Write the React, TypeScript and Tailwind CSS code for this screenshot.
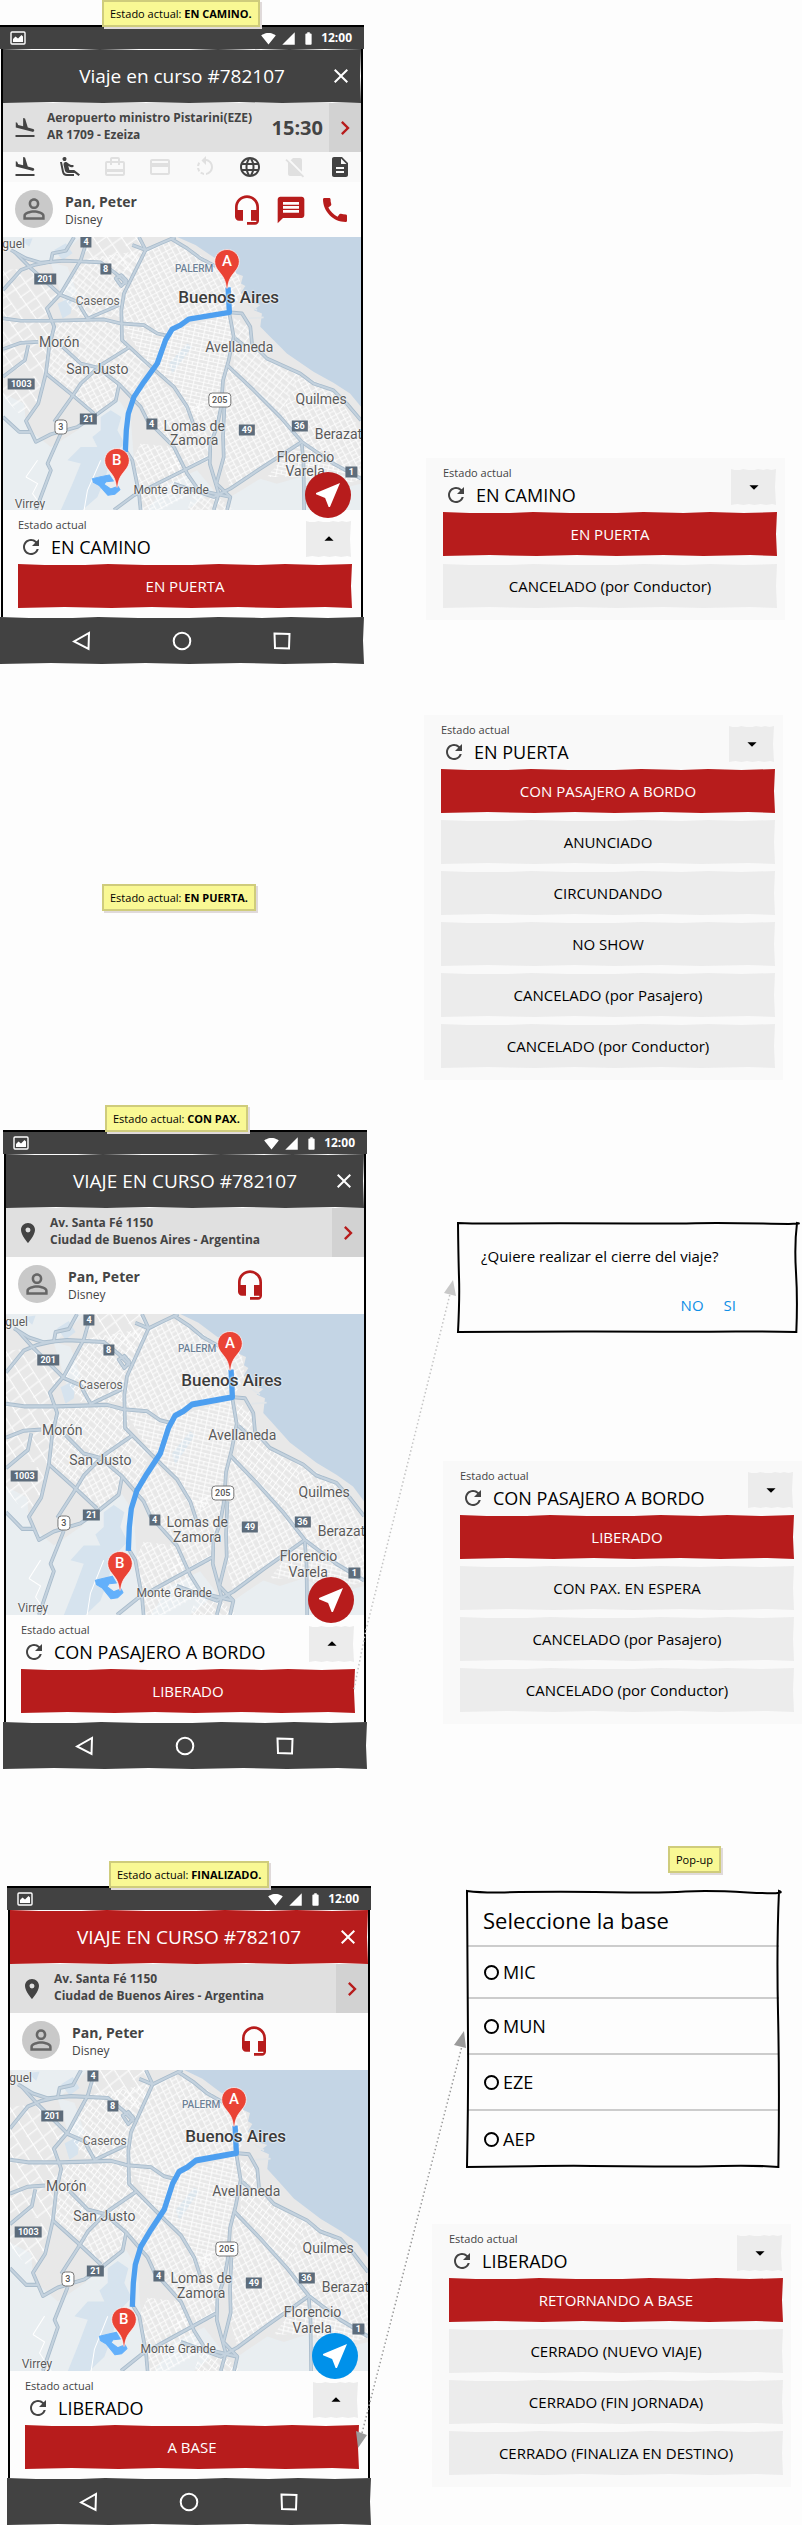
import { useId } from "react";
import type { ReactNode } from "react";
import {
  MdAirlineSeatReclineExtra,
  MdArrowDropDown,
  MdArrowDropUp,
  MdBatteryFull,
  MdCall,
  MdCardTravel,
  MdChevronRight,
  MdClose,
  MdDescription,
  MdFlightLand,
  MdHeadsetMic,
  MdLanguage,
  MdMessage,
  MdNearMe,
  MdPayment,
  MdPersonOutline,
  MdPlace,
  MdRefresh,
  MdRotateLeft,
  MdSignalCellular4Bar,
  MdSignalCellularNoSim,
  MdSignalWifi4Bar,
} from "react-icons/md";

// Hand-drawn edge for filled bars.
const WOBBLY =
  "[clip-path:polygon(0_0,8%_1px,20%_1px,27%_0,38%_1px,52%_1px,60%_0,72%_1px,80%_0,90%_1px,100%_0,calc(100%-1px)_50%,100%_100%,92%_calc(100%-1px),78%_100%,66%_calc(100%-1px),52%_100%,40%_calc(100%-1px),28%_100%,14%_calc(100%-1px),0_100%)]";

function SketchFrame() {
  return (
    <svg
      className="pointer-events-none absolute inset-0 h-full w-full overflow-visible"
      viewBox="0 0 100 100"
      preserveAspectRatio="none"
      aria-hidden="true"
    >
      <path
        d="M0 0 Q5 .7 12 .5 T30 .3 T52 .5 T70 .2 T90 .5 T100 0 Q99.200 20 99.700 45 T99.800 100 Q92 99.300 82 99.600 T60 99.800 T40 99.600 T20 99.700 T0 100 Q.5 70 .3 50 T0 0Z"
        fill="none"
        stroke="#000"
        strokeWidth="2"
        vectorEffect="non-scaling-stroke"
      />
    </svg>
  );
}

function Note({ children }: { children: ReactNode }) {
  return (
    <p className="relative z-10 w-fit border-2 border-[#cfcc7c] bg-[#f9f894] px-1.5 text-[11px] leading-[23px] whitespace-nowrap text-black shadow-[2px_2px_0_#e0dada]">
      {children}
    </p>
  );
}

/* ---------- Map ---------- */

const MAP_X = 6;
const MAP_Y = 21;
const MAP_W = 1077;
const MAP_H = 818;

const place = (x: number, y: number) => ({
  left: `${((x - MAP_X) / MAP_W) * 100}%`,
  top: `${((y - MAP_Y) / MAP_H) * 100}%`,
});

const ROADS = [
  "M6 265 60 272 160 272 310 268 360 280 430 285 470 310 505 318",
  "M415 21 435 60 400 130 370 190 362 240 364 330 440 400 520 470 560 530 582 590",
  "M525 21 480 40 435 60 395 45",
  "M510 25 560 55 600 85 645 108",
  "M30 60 75 85 120 98 190 92 300 97 345 130 378 160",
  "M345 145 362 135 378 152 362 168Z",
  "M6 180 60 120 100 105 150 95 155 70 195 62 220 21",
  "M40 65 90 115 130 150 180 195 230 215 262 268",
  "M262 21 240 90 180 190 138 235 160 290 145 350 135 430 112 520 75 572 105 635 150 612 230 590 285 555 345 512 355 465",
  "M262 265 355 225",
  "M6 357 60 338 112 335",
  "M82 345 72 390 6 440",
  "M135 430 215 495 280 550",
  "M385 352 300 405 240 460 210 505 160 575",
  "M185 350 240 400 290 412 355 462 420 530 440 570 520 650 560 730 595 780 690 800",
  "M6 560 55 605 90 605",
  "M180 610 140 700 150 720 105 839",
  "M687 250 700 320 685 390 668 450 662 530 650 590 630 640 628 700 655 790 640 839",
  "M672 530 668 620 670 680 648 760 690 800 680 839",
  "M705 325 730 345",
  "M680 405 760 480 840 560 905 635 1000 700 1083 745",
  "M690 247 725 250 750 290 755 340 800 385 900 430 940 460 1000 480 1040 520 1083 570",
  "M905 635 780 715 690 775 640 800 520 760",
  "M905 640 910 700 912 839",
  "M625 683 500 745 400 795 340 839",
  "M372 655 395 690 415 790 420 839",
];

const TOWNS: { name: string; x: number; y: number; look: string }[] = [
  { name: "guel", x: 38, y: 42, look: "text-[12px] text-[#5a5a5a]" },
  { name: "PALERM", x: 581, y: 116, look: "text-[10px] font-medium text-[#6c8196]" },
  { name: "Caseros", x: 291, y: 214, look: "text-[12px] text-[#666]" },
  { name: "Buenos Aires", x: 685, y: 201, look: "text-[17px] font-medium text-[#3c3c3c]" },
  { name: "Morón", x: 175, y: 335, look: "text-[14px] text-[#5a5a5a]" },
  { name: "San Justo", x: 290, y: 417, look: "text-[14px] text-[#5a5a5a]" },
  { name: "Avellaneda", x: 717, y: 350, look: "text-[14px] text-[#5a5a5a]" },
  { name: "Quilmes", x: 963, y: 505, look: "text-[14px] text-[#5a5a5a]" },
  { name: "Lomas de", x: 581, y: 587, look: "text-[14px] text-[#5a5a5a]" },
  { name: "Zamora", x: 581, y: 628, look: "text-[14px] text-[#5a5a5a]" },
  { name: "Berazat", x: 1015, y: 610, look: "text-[14px] text-[#5a5a5a]" },
  { name: "Florencio", x: 916, y: 680, look: "text-[14px] text-[#5a5a5a]" },
  { name: "Varela", x: 915, y: 721, look: "text-[14px] text-[#5a5a5a]" },
  { name: "Monte Grande", x: 512, y: 780, look: "text-[12px] text-[#5a5a5a]" },
  { name: "Virrey", x: 87, y: 820, look: "text-[12px] text-[#5a5a5a]" },
];

const SHIELDS = [
  { n: "4", x: 256, y: 36 },
  { n: "8", x: 315, y: 118 },
  { n: "201", x: 133, y: 147 },
  { n: "1003", x: 61, y: 460 },
  { n: "21", x: 263, y: 567 },
  { n: "4", x: 453, y: 580 },
  { n: "49", x: 740, y: 600 },
  { n: "36", x: 898, y: 587 },
  { n: "1", x: 1054, y: 726 },
];

const ROUTES = [
  { n: "3", x: 180, y: 589 },
  { n: "205", x: 658, y: 508 },
];

function Pin({ letter, x, y }: { letter: string; x: number; y: number }) {
  return (
    <div className="absolute h-10 w-[26px] -translate-x-1/2 -translate-y-full" style={place(x, y)}>
      <svg viewBox="0 0 26 40" className="absolute inset-0 h-full w-full" aria-hidden="true">
        <path
          d="M13 0.500C6 .5.7 5.800.7 12.600c0 4 1.800 7 4.500 10.200C9 27.500 11.600 31 12.300 38.500c.1 1.200 1.300 1.200 1.400 0C14.400 31 17 27.500 20.800 22.800c2.700-3.200 4.500-6.200 4.500-10.200C25.300 5.800 20 .5 13 .5Z"
          fill="#ea4335"
          stroke="#fff"
          strokeWidth=".7"
        />
      </svg>
      <span className="relative block text-center font-[Roboto] text-[15px] leading-[25px] font-medium text-white">
        {letter}
      </span>
    </div>
  );
}

function TripMap({ size }: { size: string }) {
  const id = useId().replace(/:/g, "");
  return (
    <div className={`relative overflow-hidden bg-[#e8e8e8] ${size}`}>
      <svg
        className="absolute inset-0 h-full w-full"
        viewBox={`${MAP_X} ${MAP_Y} ${MAP_W} ${MAP_H}`}
        preserveAspectRatio="none"
        role="img"
        aria-label="Mapa del viaje"
      >
        <defs>
          <pattern id={`${id}a`} width="34" height="24" patternUnits="userSpaceOnUse" patternTransform="rotate(-28)">
            <path d="M0 2H34M0 13H20M2 0V24M19 0V24" stroke="#fff" strokeWidth="2.600" fill="none" />
          </pattern>
          <pattern id={`${id}b`} width="26" height="32" patternUnits="userSpaceOnUse" patternTransform="rotate(38)">
            <path d="M0 3H26M0 18H26M4 0V32M17 3V18" stroke="#fff" strokeWidth="2.600" fill="none" />
          </pattern>
          <pattern id={`${id}c`} width="30" height="22" patternUnits="userSpaceOnUse" patternTransform="rotate(12)">
            <path d="M0 2H30M0 12H30M2 0V22M16 0V12" stroke="#fff" strokeWidth="2.600" fill="none" />
          </pattern>
          <pattern id={`${id}d`} width="70" height="56" patternUnits="userSpaceOnUse" patternTransform="rotate(-35)">
            <path d="M0 3H70M0 30H40M4 0V56M40 3V56" stroke="#fff" strokeWidth="3" fill="none" />
          </pattern>
        </defs>

        {/* open country */}
        <g fill="#e9eef1">
          <path d="M6 21H240L200 60 150 100 190 220 230 190 200 110 160 100 90 90 40 60Z" />
          <path d="M6 490 70 520 75 590 150 650 230 600 290 550 355 510 390 560 400 690 420 839H6Z" />
          <path d="M690 800 780 745 830 760 900 740 1000 780 1083 760V839H690Z" />
          <path d="M500 760 590 720 640 780 560 839H440Z" />
        </g>
        <path
          d="M300 560 330 540 362 560 350 600 372 640 330 680 315 740 290 800 245 839H180L215 760 240 700 200 690 240 650 290 650 275 620 300 600Z"
          fill="#d6e3ee"
        />
        <path d="M160 60 195 40 215 70 185 90ZM170 220 215 200 210 250 185 265ZM60 30 95 25 85 50Z" fill="#d6e3ee" />
        <path d="M505 400 560 340 575 350 515 430Z" fill="#dbe5ec" />

        {/* street grids */}
        <path d="M230 90 430 60 370 190 362 260 230 260 180 190Z" fill={`url(#${id}b)`} />
        <path d="M435 60 515 25 640 100 715 130 725 190 690 247 565 267 500 310 362 280 370 190Z" fill={`url(#${id}a)`} />
        <path d="M6 120 90 115 180 200 140 240 160 300 130 430 6 410Z" fill={`url(#${id}d)`} />
        <path d="M160 272 362 272 385 352 440 400 400 490 355 465 290 412 215 495 135 430Z" fill={`url(#${id}b)`} />
        <path d="M215 495 290 412 355 465 345 512 285 550Z" fill={`url(#${id}a)`} />
        <path d="M260 21H415L435 60 400 130 300 97 240 90Z" fill={`url(#${id}d)`} />
        <path d="M362 280 505 318 470 400 440 400Z" fill={`url(#${id}c)`} />
        <path d="M515 300 687 252 705 325 680 400 668 480 590 560 520 470 470 420Z" fill={`url(#${id}c)`} />
        <path d="M700 255 745 290 755 340 800 385 900 430 840 560 700 420Z" fill={`url(#${id}b)`} />
        <path d="M400 510 460 430 560 530 660 500 650 590 628 690 500 745 520 650 440 570Z" fill={`url(#${id}a)`} />
        <path d="M680 410 905 635 690 775 665 690Z" fill={`url(#${id}a)`} />
        <path d="M840 560 900 430 1000 480 1083 600V745L905 635Z" fill={`url(#${id}a)`} />
        <path d="M420 640 520 650 560 730 595 780 480 839H415L395 690Z" fill={`url(#${id}a)`} />
        <path d="M905 640 1083 745 1000 780 912 740 800 740 850 680Z" fill={`url(#${id}c)`} />
        <path d="M590 760 640 790 700 839H560Z" fill={`url(#${id}b)`} />
        <path d="M6 460 130 430 112 520 75 572 6 500Z" fill={`url(#${id}d)`} />
        <path d="M75 740 110 760 95 790 130 839M300 690 260 780 250 839M75 740 110 690" fill="none" stroke="#fff" strokeWidth="3" />

        {/* river */}
        <path
          d="M530 21 585 45 640 82 700 112 708 130 728 138 722 160 735 168 720 190 742 192 748 215 780 225 760 240 785 250 780 290 800 310 860 370 940 425 1000 458 1050 490 1083 530V21Z"
          fill="#c4d5e5"
        />
        <path d="M735 200 770 212M745 265 790 262M740 222 770 240" stroke="#e2e6e9" strokeWidth="5" fill="none" />

        {/* main roads */}
        <g fill="none" stroke="#a9bccc" strokeWidth="11" strokeLinejoin="round">
          {ROADS.map((d) => (
            <path key={d} d={d} />
          ))}
        </g>
        <g fill="none" stroke="#c4d2de" strokeWidth="6" strokeLinejoin="round">
          {ROADS.map((d) => (
            <path key={d} d={d} />
          ))}
        </g>

        {/* trip */}
        <path
          d="M683 172 687 247 565 267 540 285 515 297 495 330 470 400 430 455 400 500 383 550 377 600 374 665"
          fill="none"
          stroke="#4d9ff0"
          strokeWidth="16"
          strokeLinejoin="round"
        />
        <path
          d="M326 734 300 739 275 745 278 756 296 766 322 795 342 792 358 778 352 768 330 776 310 762 316 754 338 752Z"
          fill="#63b0fb"
          stroke="#63b0fb"
          strokeWidth="3"
          strokeLinejoin="round"
        />
      </svg>

      {SHIELDS.map((s) => (
        <span
          key={`${s.n}-${s.x}`}
          className="absolute -translate-x-1/2 -translate-y-1/2 bg-[#5d6c7b] px-[3px] font-[Roboto] text-[9px] leading-[11px] font-bold text-white"
          style={place(s.x, s.y)}
        >
          {s.n}
        </span>
      ))}
      {ROUTES.map((s) => (
        <span
          key={s.n}
          className="absolute -translate-x-1/2 -translate-y-1/2 rounded-[4px] border border-[#777] bg-white px-[3px] font-[Roboto] text-[9px] leading-[13px] font-medium text-[#555]"
          style={place(s.x, s.y)}
        >
          {s.n}
        </span>
      ))}
      {TOWNS.map((t) => (
        <span
          key={t.name}
          className={`absolute -translate-x-1/2 -translate-y-1/2 font-[Roboto] leading-none whitespace-nowrap [text-shadow:0_0_2px_#fff,0_0_2px_#fff] ${t.look}`}
          style={place(t.x, t.y)}
        >
          {t.name}
        </span>
      ))}
      <Pin letter="A" x={680} y={177} />
      <Pin letter="B" x={348} y={774} />
    </div>
  );
}

/* ---------- Current state ---------- */

function StateHeader({ value, open }: { value: string; open: boolean }) {
  return (
    <div className="flex items-start justify-between pb-[5px]">
      <div>
        <p className="text-[11px] leading-[14px] text-[#444]">Estado actual</p>
        <div className="mt-0.5 flex h-[25px] items-center gap-2 pl-px">
          <button type="button" aria-label="Actualizar" className="text-[#444]">
            <MdRefresh size={24} />
          </button>
          <p className="text-[18px] leading-6 whitespace-nowrap text-black">{value}</p>
        </div>
      </div>
      <button
        type="button"
        aria-label={open ? "Contraer" : "Desplegar"}
        className={`mt-[3px] mr-px flex h-9 w-[45px] items-center justify-center bg-[#ececec] text-black ${WOBBLY}`}
      >
        {open ? <MdArrowDropDown size={22} /> : <MdArrowDropUp size={22} />}
      </button>
    </div>
  );
}

function PrimaryButton({ children }: { children: ReactNode }) {
  return (
    <button type="button" className={`h-11 w-full bg-[#b71c1c] text-[15px] text-white ${WOBBLY}`}>
      {children}
    </button>
  );
}

function StatePanel({
  value,
  primary,
  options,
  spacing = "gap-[7px]",
}: {
  value: string;
  primary: string;
  options: string[];
  spacing?: string;
}) {
  return (
    <div className="w-full max-w-[359px] bg-[#f9f9f9] pt-2 pr-2 pb-3 pl-[17px]">
      <StateHeader value={value} open />
      <div className={`flex flex-col ${spacing}`}>
        <PrimaryButton>{primary}</PrimaryButton>
        {options.map((o) => (
          <button key={o} type="button" className={`h-11 w-full bg-[#ececec] text-[15px] text-black ${WOBBLY}`}>
            {o}
          </button>
        ))}
      </div>
    </div>
  );
}

/* ---------- Phone ---------- */

function StatusBar() {
  return (
    <div className="flex h-6 items-center justify-between border-t-2 border-black bg-[#424242] pr-3 pl-[10px] text-white">
      <svg width="16" height="14" viewBox="0 0 16 14" aria-hidden="true">
        <rect x="1" y="1" width="14" height="12" rx="1" fill="none" stroke="#fff" strokeWidth="1.400" />
        <path d="M3 11V8l2.500-2.500L8 7.500 11.500 4 13 5.500V11Z" fill="#fff" />
      </svg>
      <div className="flex items-center gap-[5px]">
        <MdSignalWifi4Bar size={15} />
        <MdSignalCellular4Bar size={15} />
        <MdBatteryFull size={15} />
        <span className="text-[12px] leading-none font-bold">12:00</span>
      </div>
    </div>
  );
}

const SERVICES = [
  { Icon: MdFlightLand, on: true },
  { Icon: MdAirlineSeatReclineExtra, on: true },
  { Icon: MdCardTravel, on: false },
  { Icon: MdPayment, on: false },
  { Icon: MdRotateLeft, on: false },
  { Icon: MdLanguage, on: true },
  { Icon: MdSignalCellularNoSim, on: false },
  { Icon: MdDescription, on: true },
];

function Phone({
  title,
  bar,
  address,
  flight = false,
  fab,
  state,
  action,
}: {
  title: string;
  bar: string;
  address: [string, string];
  flight?: boolean;
  fab: string;
  state: string;
  action: string;
}) {
  return (
    <article className="w-full max-w-[364px]">
      <StatusBar />
      <div className="mx-px border-x-2 border-black">
        <header className={`grid h-[54px] grid-cols-[32px_1fr_32px] items-center text-white ${bar} ${WOBBLY}`}>
          <h2 className="col-start-2 text-center text-[19px] whitespace-nowrap">{title}</h2>
          <button type="button" aria-label="Cerrar" className="justify-self-start">
            <MdClose size={24} />
          </button>
        </header>

        <div className="flex h-[49px] items-stretch bg-[#e0e0e0] text-[#444]">
          <div className="flex w-11 items-center justify-center">
            {flight ? <MdFlightLand size={24} /> : <MdPlace size={24} />}
          </div>
          <p className="flex-1 pt-1.5 text-[12px] leading-[17px] font-bold whitespace-nowrap">
            {address[0]}
            <br />
            {address[1]}
          </p>
          {flight && <time className="self-center pr-1.5 text-[20px] leading-none font-bold">15:30</time>}
          <button
            type="button"
            aria-label="Ver detalle"
            className="flex w-8 items-center justify-center bg-[#d2d2d2] text-[#b71c1c]"
          >
            <MdChevronRight size={28} />
          </button>
        </div>

        {flight && (
          <ul className="flex h-[30px] items-center justify-between bg-[#f9f9f9] pr-[9px] pl-[10px]">
            {SERVICES.map(({ Icon, on }, i) => (
              <li key={i} className={on ? "text-[#424242]" : "text-[#e0e0e0]"}>
                <Icon size={24} />
              </li>
            ))}
          </ul>
        )}

        <div className={`flex items-start pt-2 pl-3 ${flight ? "h-[55px]" : "h-[57px]"}`}>
          <div className="flex size-[38px] items-center justify-center rounded-full bg-[#c9c9c9] text-[#666]">
            <MdPersonOutline size={32} />
          </div>
          <div className="flex-1 pt-[3px] pl-3 text-[#444]">
            <p className="text-[14px] leading-[18px] font-bold">Pan, Peter</p>
            <p className="text-[12px] leading-[18px]">Disney</p>
          </div>
          <div className="flex w-[130px] gap-3 pt-1 text-[#b71c1c]">
            <button type="button" aria-label="Soporte">
              <MdHeadsetMic size={32} />
            </button>
            {flight && (
              <>
                <button type="button" aria-label="Mensaje">
                  <MdMessage size={32} />
                </button>
                <button type="button" aria-label="Llamar">
                  <MdCall size={32} />
                </button>
              </>
            )}
          </div>
        </div>

        <div className="relative">
          <TripMap size={flight ? "h-[273px]" : "h-[301px]"} />
          <button
            type="button"
            aria-label="Navegar"
            className={`absolute right-[10px] -bottom-2 z-10 flex size-[46px] items-center justify-center rounded-full text-white ${fab}`}
          >
            <MdNearMe size={32} />
          </button>
        </div>

        <div className="pt-2 pr-[9px] pb-[9px] pl-[15px]">
          <StateHeader value={state} open={false} />
          <PrimaryButton>{action}</PrimaryButton>
        </div>
      </div>

      <nav className={`grid h-[47px] grid-cols-3 place-items-center bg-[#424242] px-8 ${WOBBLY}`}>
        <button type="button" aria-label="Atrás">
          <svg width="20" height="20" viewBox="0 0 20 20" fill="none" stroke="#fff" strokeWidth="2">
            <path d="M17 2 16.500 18 2 10.500Z" />
          </svg>
        </button>
        <button type="button" aria-label="Inicio">
          <svg width="20" height="20" viewBox="0 0 20 20" fill="none" stroke="#fff" strokeWidth="2">
            <circle cx="10" cy="10" r="8.300" />
          </svg>
        </button>
        <button type="button" aria-label="Recientes">
          <svg width="20" height="20" viewBox="0 0 20 20" fill="none" stroke="#fff" strokeWidth="2">
            <path d="M2.500 2.500 17.500 3 17 17.500 3 17Z" />
          </svg>
        </button>
      </nav>
    </article>
  );
}

const ROW = "relative grid grid-cols-[424fr_378fr]";
const HOME: [string, string] = ["Av. Santa Fé 1150", "Ciudad de Buenos Aires - Argentina"];

export default function App() {
  return (
    <main className="w-full bg-[#fdfdfd] font-['Open_Sans','Noto_Sans',sans-serif]">
      <section className={ROW}>
        <div>
          <div className="-mb-0.5 pl-[102px]">
            <Note>
              Estado actual: <b>EN CAMINO.</b>
            </Note>
          </div>
          <Phone
            title="Viaje en curso #782107"
            bar="bg-[#424242]"
            address={["Aeropuerto ministro Pistarini(EZE)", "AR 1709 - Ezeiza"]}
            flight
            fab="bg-[#b71c1c]"
            state="EN CAMINO"
            action="EN PUERTA"
          />
        </div>
        <div className="self-end pb-11 pl-[2px]">
          <StatePanel value="EN CAMINO" primary="EN PUERTA" options={["CANCELADO (por Conductor)"]} spacing="gap-2" />
        </div>
      </section>

      <section className={`${ROW} mt-[51px] items-center`}>
        <div className="pl-[102px]">
          <Note>
            Estado actual: <b>EN PUERTA.</b>
          </Note>
        </div>
        <StatePanel
          value="EN PUERTA"
          primary="CON PASAJERO A BORDO"
          options={["ANUNCIADO", "CIRCUNDANDO", "NO SHOW", "CANCELADO (por Pasajero)", "CANCELADO (por Conductor)"]}
        />
      </section>

      <section className={`${ROW} mt-[25px]`}>
        <div className="pl-[3px]">
          <div className="-mb-0.5 pl-[102px]">
            <Note>
              Estado actual: <b>CON PAX.</b>
            </Note>
          </div>
          <Phone
            title="VIAJE EN CURSO #782107"
            bar="bg-[#424242]"
            address={HOME}
            fab="bg-[#b71c1c]"
            state="CON PASAJERO A BORDO"
            action="LIBERADO"
          />
        </div>
        <div className="flex flex-col pt-[118px] pl-[19px]">
          <div role="dialog" aria-label="Cierre del viaje" className="relative mr-[5px] ml-[15px] h-[109px] px-[23px] pt-[23px]">
            <SketchFrame />
            <p className="text-[15px] leading-5 whitespace-nowrap">¿Quiere realizar el cierre del viaje?</p>
            <div className="mt-[29px] flex justify-end gap-5 pr-[38px] text-[15px] leading-5 text-[#0f8fe6]">
              <button type="button">NO</button>
              <button type="button">SI</button>
            </div>
          </div>
          <div className="mt-[129px]">
            <StatePanel
              value="CON PASAJERO A BORDO"
              primary="LIBERADO"
              options={["CON PAX. EN ESPERA", "CANCELADO (por Pasajero)", "CANCELADO (por Conductor)"]}
            />
          </div>
        </div>
        <svg
          className="pointer-events-none absolute top-[170px] left-[350px] z-20"
          width="110"
          height="416"
          viewBox="350 1275 110 416"
          aria-hidden="true"
        >
          <path d="M354 1689 366 1630 450 1294" fill="none" stroke="#c4c4c4" strokeWidth="1.500" strokeDasharray="1.500 2.500" />
          <path d="M453 1280 444 1293 456 1296Z" fill="#c8c8c8" />
        </svg>
      </section>

      <section className={`${ROW} mt-[77px]`}>
        <div className="pt-[15px] pl-[7px]">
          <div className="-mb-0.5 pl-[102px]">
            <Note>
              Estado actual: <b>FINALIZADO.</b>
            </Note>
          </div>
          <Phone
            title="VIAJE EN CURSO #782107"
            bar="bg-[#b71c1c]"
            address={HOME}
            fab="bg-[#0091ea]"
            state="LIBERADO"
            action="A BASE"
          />
        </div>
        <div className="pl-2">
          <div className="pl-[236px]">
            <Note>Pop-up</Note>
          </div>
          <form className="relative mt-[18px] mr-[23px] ml-[35px]">
            <SketchFrame />
            <h2 className="h-14 border-b-2 border-[#ccc] pt-3.5 pl-4 text-[22px] leading-[30px]">Seleccione la base</h2>
            {["MIC", "MUN", "EZE", "AEP"].map((base, i) => (
              <label
                key={base}
                className={`flex items-center gap-1 pl-[17px] text-[18px] ${
                  i === 0 ? "h-[52px]" : "h-14"
                } ${i < 3 ? "border-b-2 border-[#ccc]" : ""}`}
              >
                <input
                  type="radio"
                  name="base"
                  value={base}
                  className="size-[15px] appearance-none rounded-full border-2 border-black checked:bg-black"
                />
                {base}
              </label>
            ))}
          </form>
          <div className="mt-[57px]">
            <StatePanel
              value="LIBERADO"
              primary="RETORNANDO A BASE"
              options={["CERRADO (NUEVO VIAJE)", "CERRADO (FIN JORNADA)", "CERRADO (FINALIZA EN DESTINO)"]}
            />
          </div>
        </div>
        <svg
          className="pointer-events-none absolute top-[184px] left-[354px] z-20"
          width="114"
          height="420"
          viewBox="354 2030 114 420"
          aria-hidden="true"
        >
          <path d="M362 2433 462 2046" fill="none" stroke="#9a9a9a" strokeWidth="1.500" strokeDasharray="1.500 2.500" />
          <path d="M464 2031 454 2045 466 2048ZM358 2448 356 2431 367 2435Z" fill="#9a9a9a" />
        </svg>
      </section>
    </main>
  );
}
